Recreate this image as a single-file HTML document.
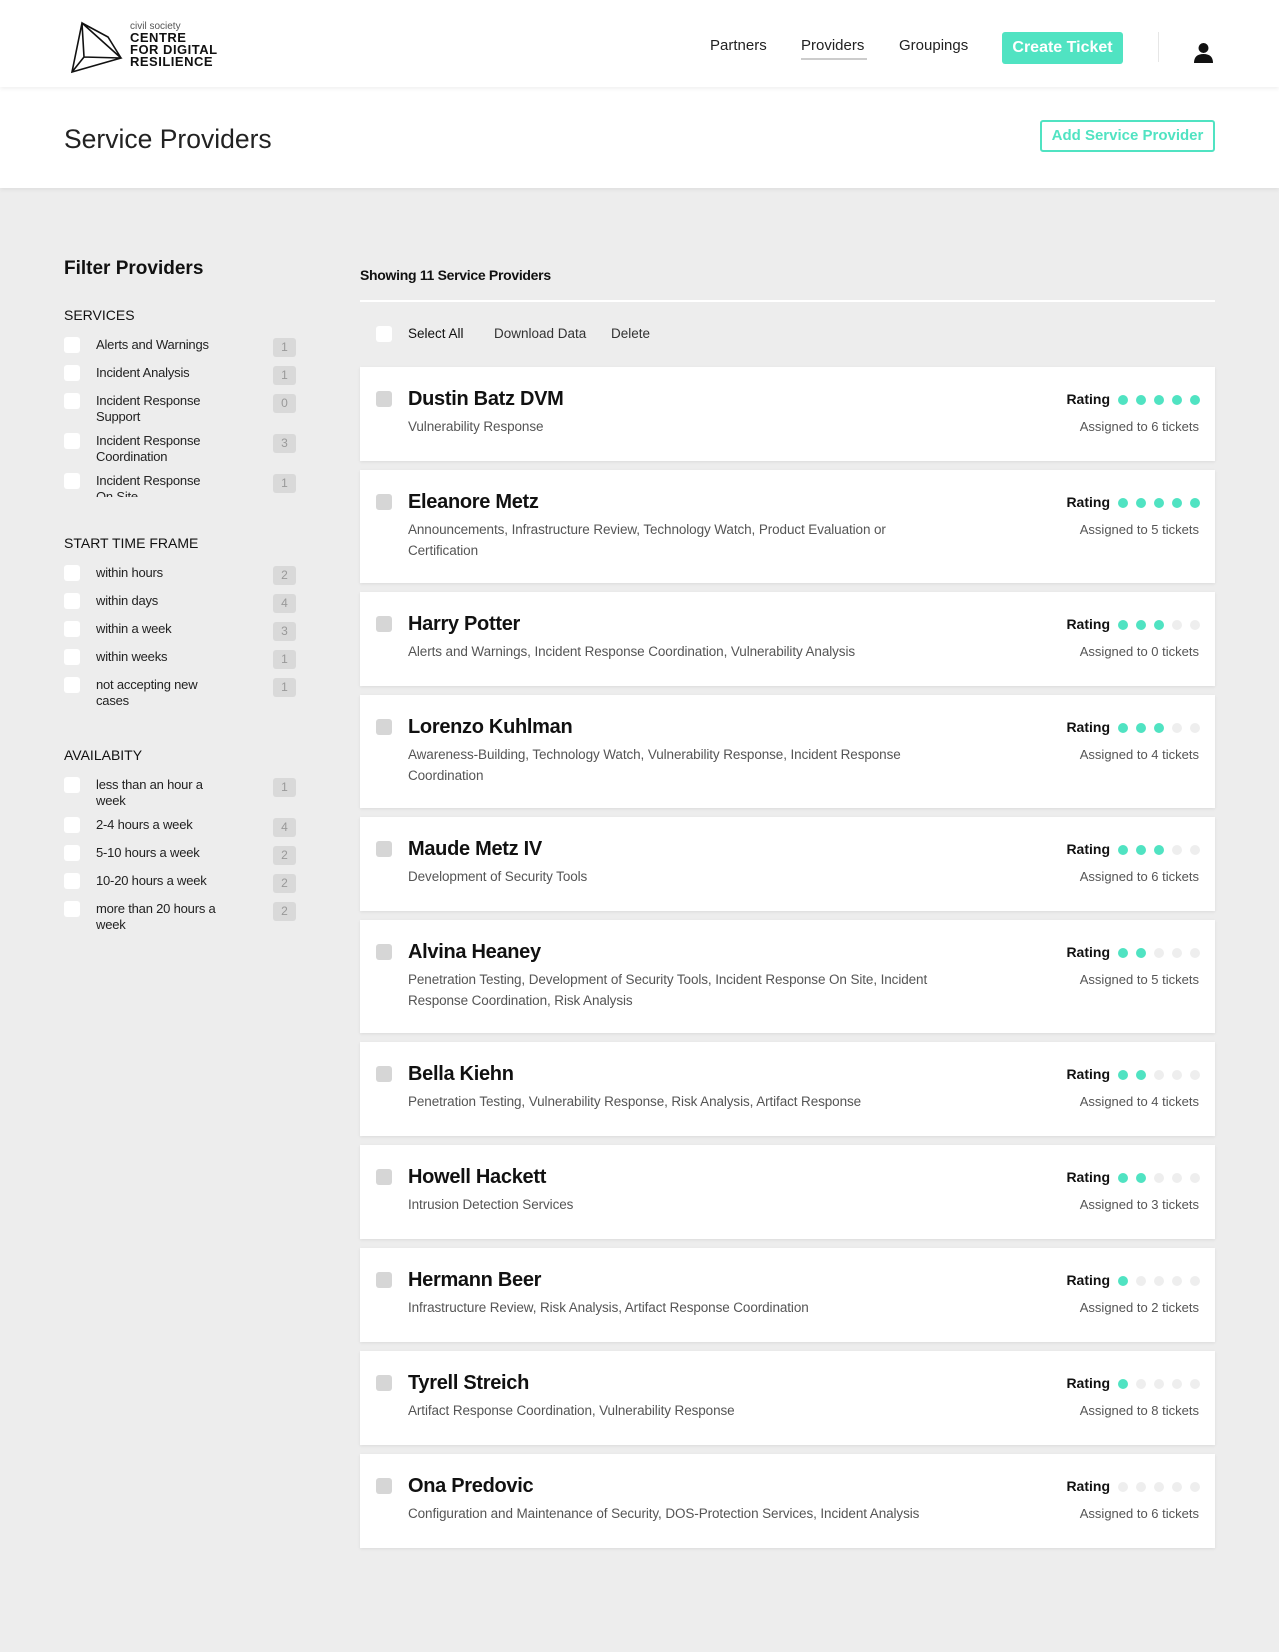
<!DOCTYPE html>
<html><head><meta charset="utf-8"><style>
*{box-sizing:border-box;margin:0;padding:0}
body{width:1279px;height:1652px;background:#ededed;font-family:"Liberation Sans",sans-serif;color:#111;position:relative;overflow:hidden}
.abs{position:absolute}
#hdr{position:absolute;left:0;top:0;width:1279px;height:87px;background:#fff;box-shadow:0 2px 4px rgba(0,0,0,.06);z-index:2}
#band{position:absolute;left:0;top:87px;width:1279px;height:101px;background:#fff;box-shadow:0 2px 4px rgba(0,0,0,.06)}
.nav{position:absolute;top:37px;font-size:15px;color:#222}
.btn{position:absolute;left:1002px;top:32px;width:121px;height:32px;background:#50e3c2;color:#fff;border-radius:3px;font-size:16px;font-weight:bold;text-align:center;line-height:32px}
.add{position:absolute;left:1040px;top:120px;width:175px;height:32px;border:2px solid #50e3c2;border-radius:3px;color:#50e3c2;font-size:15px;font-weight:bold;text-align:center;line-height:28px}
.sec{position:absolute;left:64px;font-size:14px;color:#111}
.it{position:absolute;left:64px;width:232px;height:20px}
.it .cb{position:absolute;left:0;top:0;width:16px;height:16px;background:#fff;border-radius:3px}
.it .lb{position:absolute;left:32px;top:0;width:130px;font-size:13px;line-height:16px;color:#222;letter-spacing:-.2px}
.it .ct{position:absolute;left:209px;top:1px;width:23px;height:19px;background:#d9d9d9;border-radius:3px;color:#999;font-size:12px;text-align:center;line-height:19px}
.card{position:absolute;left:360px;width:855px;background:#fff;box-shadow:0 1px 3px rgba(0,0,0,.08)}
.card .cb{position:absolute;left:16px;top:24px;width:16px;height:16px;background:#d6d6d6;border-radius:3px}
.card .nm{position:absolute;left:48px;top:21px;font-size:20px;font-weight:bold;letter-spacing:-.3px}
.card .ds{position:absolute;left:48px;top:49px;white-space:nowrap;font-size:13.5px;line-height:21px;color:#555;letter-spacing:-.1px}
.card .rt{position:absolute;right:105px;top:24px;font-size:14px;font-weight:bold}
.card .dots{position:absolute;left:758px;top:25px}
.card .dots i{display:inline-block;width:10px;height:10px;border-radius:50%;background:#eee;margin-right:8px}
.card .dots i.on{background:#50e3c2}
.card .as{position:absolute;right:16px;top:52px;font-size:13px;color:#555}
</style></head><body>
<div id="hdr">
<svg class="abs" style="left:70px;top:21px" width="54" height="53" viewBox="0 0 54 53" fill="none" stroke="#111" stroke-width="1.6"><path d="M12 2 L2 51 L51 37 Z M12 2 L38 16 L51 37 M12 2 L14 36 L51 37 M14 36 L2 51 M12 2 L51 37"/></svg>
<div class="abs" style="left:130px;top:22px;font-size:10px;color:#555;line-height:10px">civil society</div>
<div class="abs" style="left:130px;top:32px;font-size:13px;font-weight:bold;line-height:12px;letter-spacing:.5px">CENTRE<br>FOR DIGITAL<br>RESILIENCE</div>
<div class="nav" style="left:710px">Partners</div>
<div class="nav" style="left:801px">Providers</div>
<div class="abs" style="left:801px;top:58px;width:66px;height:2px;background:#ccc"></div>
<div class="nav" style="left:899px">Groupings</div>
<div class="btn">Create Ticket</div>
<div class="abs" style="left:1158px;top:32px;width:1px;height:30px;background:#e6e6e6"></div>
<svg class="abs" style="left:1194px;top:43px" width="19" height="20" viewBox="0 0 19 20"><circle cx="9.5" cy="5" r="5" fill="#111"/><path d="M0 20 Q0 11 9.5 11 Q19 11 19 20 Z" fill="#111"/></svg>
</div>
<div id="band">
<div class="abs" style="left:64px;top:37px;font-size:26.5px;color:#222">Service Providers</div>
<div class="add" style="top:33px">Add Service Provider</div>
</div>

<div class="abs" style="left:64px;top:258px;font-size:19px;font-weight:bold">Filter Providers</div>
<div class="sec" style="top:307px">SERVICES</div>
<div class="it" style="top:337px"><div class="cb"></div><div class="lb">Alerts and Warnings</div><div class="ct">1</div></div>
<div class="it" style="top:365px"><div class="cb"></div><div class="lb">Incident Analysis</div><div class="ct">1</div></div>
<div class="it" style="top:393px"><div class="cb"></div><div class="lb">Incident Response Support</div><div class="ct">0</div></div>
<div class="it" style="top:433px"><div class="cb"></div><div class="lb">Incident Response Coordination</div><div class="ct">3</div></div>
<div class="it" style="top:473px;height:24px;overflow:hidden"><div class="cb"></div><div class="lb" style="width:115px">Incident Response On Site</div><div class="ct">1</div></div>

<div class="sec" style="top:535px">START TIME FRAME</div>
<div class="it" style="top:565px"><div class="cb"></div><div class="lb">within hours</div><div class="ct">2</div></div>
<div class="it" style="top:593px"><div class="cb"></div><div class="lb">within days</div><div class="ct">4</div></div>
<div class="it" style="top:621px"><div class="cb"></div><div class="lb">within a week</div><div class="ct">3</div></div>
<div class="it" style="top:649px"><div class="cb"></div><div class="lb">within weeks</div><div class="ct">1</div></div>
<div class="it" style="top:677px"><div class="cb"></div><div class="lb">not accepting new cases</div><div class="ct">1</div></div>

<div class="sec" style="top:747px">AVAILABITY</div>
<div class="it" style="top:777px"><div class="cb"></div><div class="lb">less than an hour a week</div><div class="ct">1</div></div>
<div class="it" style="top:817px"><div class="cb"></div><div class="lb">2-4 hours a week</div><div class="ct">4</div></div>
<div class="it" style="top:845px"><div class="cb"></div><div class="lb">5-10 hours a week</div><div class="ct">2</div></div>
<div class="it" style="top:873px"><div class="cb"></div><div class="lb">10-20 hours a week</div><div class="ct">2</div></div>
<div class="it" style="top:901px"><div class="cb"></div><div class="lb">more than 20 hours a week</div><div class="ct">2</div></div>

<div class="abs" style="left:360px;top:267px;font-size:14px;font-weight:bold;letter-spacing:-.3px">Showing 11 Service Providers</div>
<div class="abs" style="left:360px;top:300px;width:855px;height:2px;background:#fff"></div>
<div class="abs" style="left:376px;top:326px;width:16px;height:16px;background:#fff;border-radius:3px"></div>
<div class="abs" style="left:408px;top:326px;font-size:13.5px">Select All</div>
<div class="abs" style="left:494px;top:326px;font-size:13.5px;color:#333">Download Data</div>
<div class="abs" style="left:611px;top:326px;font-size:13.5px;color:#333">Delete</div>

<div class="card" style="top:367px;height:94px"><div class="cb"></div><div class="nm">Dustin Batz DVM</div><div class="ds">Vulnerability Response</div><div class="rt">Rating</div><div class="dots"><i class="on"></i><i class="on"></i><i class="on"></i><i class="on"></i><i class="on"></i></div><div class="as">Assigned to 6 tickets</div></div>
<div class="card" style="top:470px;height:113px"><div class="cb"></div><div class="nm">Eleanore Metz</div><div class="ds">Announcements, Infrastructure Review, Technology Watch, Product Evaluation or<br>Certification</div><div class="rt">Rating</div><div class="dots"><i class="on"></i><i class="on"></i><i class="on"></i><i class="on"></i><i class="on"></i></div><div class="as">Assigned to 5 tickets</div></div>
<div class="card" style="top:592px;height:94px"><div class="cb"></div><div class="nm">Harry Potter</div><div class="ds">Alerts and Warnings, Incident Response Coordination, Vulnerability Analysis</div><div class="rt">Rating</div><div class="dots"><i class="on"></i><i class="on"></i><i class="on"></i><i></i><i></i></div><div class="as">Assigned to 0 tickets</div></div>
<div class="card" style="top:695px;height:113px"><div class="cb"></div><div class="nm">Lorenzo Kuhlman</div><div class="ds">Awareness-Building, Technology Watch, Vulnerability Response, Incident Response<br>Coordination</div><div class="rt">Rating</div><div class="dots"><i class="on"></i><i class="on"></i><i class="on"></i><i></i><i></i></div><div class="as">Assigned to 4 tickets</div></div>
<div class="card" style="top:817px;height:94px"><div class="cb"></div><div class="nm">Maude Metz IV</div><div class="ds">Development of Security Tools</div><div class="rt">Rating</div><div class="dots"><i class="on"></i><i class="on"></i><i class="on"></i><i></i><i></i></div><div class="as">Assigned to 6 tickets</div></div>
<div class="card" style="top:920px;height:113px"><div class="cb"></div><div class="nm">Alvina Heaney</div><div class="ds">Penetration Testing, Development of Security Tools, Incident Response On Site, Incident<br>Response Coordination, Risk Analysis</div><div class="rt">Rating</div><div class="dots"><i class="on"></i><i class="on"></i><i></i><i></i><i></i></div><div class="as">Assigned to 5 tickets</div></div>
<div class="card" style="top:1042px;height:94px"><div class="cb"></div><div class="nm">Bella Kiehn</div><div class="ds">Penetration Testing, Vulnerability Response, Risk Analysis, Artifact Response</div><div class="rt">Rating</div><div class="dots"><i class="on"></i><i class="on"></i><i></i><i></i><i></i></div><div class="as">Assigned to 4 tickets</div></div>
<div class="card" style="top:1145px;height:94px"><div class="cb"></div><div class="nm">Howell Hackett</div><div class="ds">Intrusion Detection Services</div><div class="rt">Rating</div><div class="dots"><i class="on"></i><i class="on"></i><i></i><i></i><i></i></div><div class="as">Assigned to 3 tickets</div></div>
<div class="card" style="top:1248px;height:94px"><div class="cb"></div><div class="nm">Hermann Beer</div><div class="ds">Infrastructure Review, Risk Analysis, Artifact Response Coordination</div><div class="rt">Rating</div><div class="dots"><i class="on"></i><i></i><i></i><i></i><i></i></div><div class="as">Assigned to 2 tickets</div></div>
<div class="card" style="top:1351px;height:94px"><div class="cb"></div><div class="nm">Tyrell Streich</div><div class="ds">Artifact Response Coordination, Vulnerability Response</div><div class="rt">Rating</div><div class="dots"><i class="on"></i><i></i><i></i><i></i><i></i></div><div class="as">Assigned to 8 tickets</div></div>
<div class="card" style="top:1454px;height:94px"><div class="cb"></div><div class="nm">Ona Predovic</div><div class="ds">Configuration and Maintenance of Security, DOS-Protection Services, Incident Analysis</div><div class="rt">Rating</div><div class="dots"><i></i><i></i><i></i><i></i><i></i></div><div class="as">Assigned to 6 tickets</div></div>
</body></html>
